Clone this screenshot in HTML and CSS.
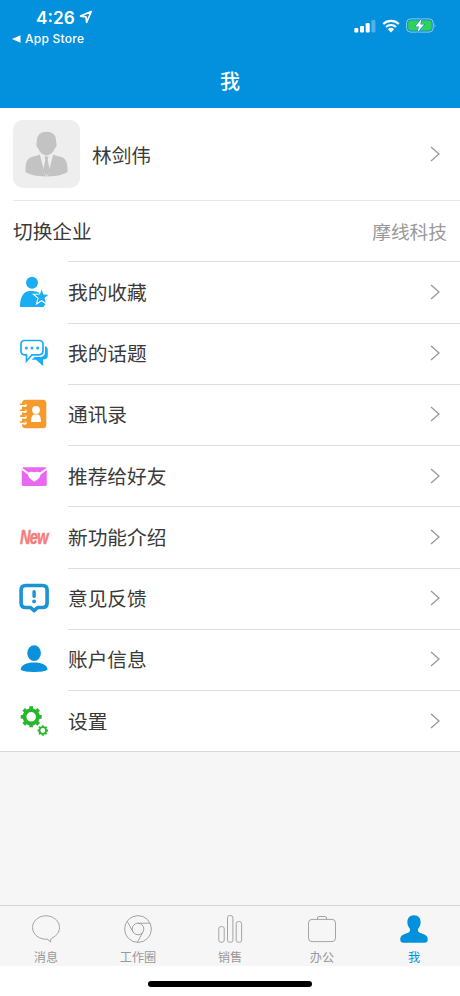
FILE: index.html
```html
<!DOCTYPE html>
<html lang="zh-CN">
<head>
  <meta charset="UTF-8" />
  <meta name="viewport" content="width=device-width, initial-scale=1" />
  <title>我</title>
  <link rel="stylesheet" href="styles.css">
</head>
<body>

  <header class="header">
    <div class="status">
      <div class="status-left">
        <div class="clock">
          <span>4:26</span>
          <svg width="14" height="14" viewBox="0 0 14 14"><path d="M12.3 1.5 L1.5 6.1 L7 6.9 L7.6 12.4 Z" fill="none" stroke="#fff" stroke-width="1.6" stroke-linejoin="round"/></svg>
        </div>
        <div class="back">
          <svg width="9" height="8" viewBox="0 0 9 8"><path d="M0 4 L8.5 0.2 V7.8 Z" fill="#fff"/></svg>
          <span>App Store</span>
        </div>
      </div>
      <div class="status-right">
        <svg width="22" height="14" viewBox="0 0 22 14" fill="#fff">
          <rect x="0.3" y="9" width="4" height="4.5" rx="1"/>
          <rect x="6" y="7" width="4" height="6.5" rx="1"/>
          <rect x="11.7" y="4" width="4" height="9.5" rx="1"/>
          <rect x="17.4" y="1" width="4" height="12.5" rx="1" opacity="0.3"/>
        </svg>
        <svg class="wifi" width="18" height="14" viewBox="0 0 18 14">
          <path d="M1.2 5 A11.2 11.2 0 0 1 16.8 5 M4 8 A7.2 7.2 0 0 1 14 8" fill="none" stroke="#fff" stroke-width="2.2"/>
          <path d="M5.9 10.2 A4.5 4.5 0 0 1 12.1 10.2 L9 13.5 Z" fill="#fff"/>
        </svg>
        <svg class="battery" width="31" height="15" viewBox="0 0 31 15">
          <rect x="0.6" y="0.9" width="26.6" height="13.2" rx="4" fill="none" stroke="#8acbea" stroke-width="1"/>
          <path d="M28.6 5.2 Q30.2 7.5 28.6 9.8 Z" fill="#8acbea"/>
          <rect x="2.2" y="2.4" width="23.4" height="10.2" rx="2.4" fill="#30d158"/>
          <path d="M15.5 0.7 L9.3 8.4 H12.9 L11.5 14.3 L18.2 6.5 H14.4 Z" fill="#fff" stroke="#0390dc" stroke-width="1.1" paint-order="stroke"/>
        </svg>
      </div>
    </div>
    <h1 class="title">我</h1>
  </header>

  <main class="content">
    <section class="list">
      <div class="profile">
        <div class="avatar">
          <svg width="67" height="68" viewBox="0.5 0 67 68" fill="#c3c3c3">
            <path d="M34 11.8 C41 11.8 43.8 16 43.6 22 C45 25 43.3 27.5 42.3 28.6 C40.5 33 37.5 35.4 34 35.4 C30.5 35.4 27.5 33 25.7 28.6 C24.7 27.5 23 25 24.4 22 C24.2 16 27 11.8 34 11.8 Z"/>
            <path d="M27.3 34.6 L33 56.5 C24 56.2 17 54.7 13 52 C12.6 43 14.5 39 18.5 37.3 C21.5 36.2 25.5 36 27.3 34.6 Z"/>
            <path d="M40.7 34.6 L35 56.5 C44 56.2 51 54.7 55 52 C55.4 43 53.5 39 49.5 37.3 C46.5 36.2 42.5 36 40.7 34.6 Z"/>
            <path d="M32 36.5 H36 L35.2 40 L37.3 50 L34 57 L30.7 50 L32.8 40 Z"/>
          </svg>
        </div>
        <span class="name">林剑伟</span>
        <svg class="arrow" width="10" height="16" viewBox="0 0 10 16"><path d="M1 1 L9 8 L1 15"/></svg>
      </div>

      <div class="company">
        <span>切换企业</span>
        <span class="company-name">摩线科技</span>
      </div>

      <div class="item">
        <svg class="icon" width="30" height="32" viewBox="0 0 30 32" fill="#1badf3">
          <circle cx="13" cy="6.8" r="6"/>
          <path d="M1 31 C1 21 4.5 15 11 15 C15 15 19 15.2 21 17.5 L22 24 L26.5 28 L24.5 31 Z"/>
          <path d="M22.6 13.8 L24.4 18.5 L29.4 18.8 L25.5 21.9 L26.8 26.8 L22.6 24 L18.4 26.8 L19.7 21.9 L15.8 18.8 L20.8 18.5 Z" stroke="#fff" stroke-width="2.2" paint-order="stroke"/>
        </svg>
        <span class="label">我的收藏</span>
        <svg class="arrow" width="10" height="16" viewBox="0 0 10 16"><path d="M1 1 L9 8 L1 15"/></svg>
      </div>

      <div class="item">
        <svg class="icon" width="30" height="32" viewBox="0 0 30 32">
          <path d="M26 9 Q28.8 10 28.8 13 V18.5 Q28.8 22.3 24 22.6 V29 L17 22.8 H12.6 L15.5 20 H21.5 Q26 19.6 26 15 Z" fill="#1badf3"/>
          <path d="M5.5 3.5 H20 Q24 3.5 24 7.5 V13.8 Q24 17.8 20 17.8 H13 L7.5 24 V17.8 H5.5 Q2 17.8 2 13.8 V7.5 Q2 3.5 5.5 3.5 Z" fill="#fff" stroke="#1badf3" stroke-width="1.7"/>
          <g fill="#1badf3"><circle cx="7.4" cy="11" r="1.5"/><circle cx="13" cy="11" r="1.5"/><circle cx="18.6" cy="11" r="1.5"/></g>
        </svg>
        <span class="label">我的话题</span>
        <svg class="arrow" width="10" height="16" viewBox="0 0 10 16"><path d="M1 1 L9 8 L1 15"/></svg>
      </div>

      <div class="item">
        <svg class="icon" width="30" height="32" viewBox="0 0 30 32">
          <rect x="3" y="1.7" width="24.3" height="28.6" rx="3.5" fill="#f69a2c"/>
          <g fill="none" stroke="#fff" stroke-width="2"><path d="M1 7.6 H5.7 M1 13.5 H5.7 M1 19.4 H5.7 M1 25.3 H5.7"/></g>
          <g fill="#fff"><circle cx="6" cy="7.3" r="1.8"/><circle cx="6" cy="13.2" r="1.8"/><circle cx="6" cy="19.1" r="1.8"/><circle cx="6" cy="25" r="1.8"/></g>
          <path d="M1.5 6.3 H6 M1.5 12.2 H6 M1.5 18.1 H6 M1.5 24 H6" stroke="#f69a2c" stroke-width="1.6" stroke-linecap="round"/>
          <circle cx="17" cy="12" r="3.9" fill="#fff"/>
          <path d="M12.1 24 Q12 16.9 14.9 16.4 H19.1 Q22 16.9 21.9 24 Z" fill="#fff"/>
        </svg>
        <span class="label">通讯录</span>
        <svg class="arrow" width="10" height="16" viewBox="0 0 10 16"><path d="M1 1 L9 8 L1 15"/></svg>
      </div>

      <div class="item">
        <svg class="icon" width="30" height="32" viewBox="0 0 30 32">
          <rect x="2.8" y="7.2" width="25" height="18.8" rx="1.6" fill="#e868f2"/>
          <path d="M2.8 7.7 L9.6 12.4 Q12.4 11 15.3 12.2 Q18.2 11 21 12.4 L27.8 7.7 V10 L21.7 14.6 Q20.8 18.8 15.3 21.8 Q9.8 18.8 8.9 14.6 L2.8 10 Z" fill="#fff"/>
        </svg>
        <span class="label">推荐给好友</span>
        <svg class="arrow" width="10" height="16" viewBox="0 0 10 16"><path d="M1 1 L9 8 L1 15"/></svg>
      </div>

      <div class="item">
        <span class="icon new"><b>New</b></span>
        <span class="label">新功能介绍</span>
        <svg class="arrow" width="10" height="16" viewBox="0 0 10 16"><path d="M1 1 L9 8 L1 15"/></svg>
      </div>

      <div class="item">
        <svg class="icon" width="30" height="32" viewBox="0 0 30 32">
          <path d="M6.6 3.5 H23.6 Q28.1 3.5 28.1 8 V21 Q28.1 25.5 23.6 25.5 H18.6 L15.1 28.7 L11.6 25.5 H6.6 Q2.1 25.5 2.1 21 V8 Q2.1 3.5 6.6 3.5 Z" fill="none" stroke="#1b93d4" stroke-width="3.6" stroke-linejoin="round"/>
          <path d="M15.1 9.8 V14.3" stroke="#1b93d4" stroke-width="3.4" stroke-linecap="round"/>
          <circle cx="15.1" cy="19.3" r="1.9" fill="#1b93d4"/>
        </svg>
        <span class="label">意见反馈</span>
        <svg class="arrow" width="10" height="16" viewBox="0 0 10 16"><path d="M1 1 L9 8 L1 15"/></svg>
      </div>

      <div class="item">
        <svg class="icon" width="30" height="32" viewBox="0 0 30 32" fill="#0c92dc">
          <ellipse cx="15.1" cy="10.2" rx="6.8" ry="7.9"/>
          <path d="M1.6 26.6 C2.2 21.8 7.6 19.6 15.1 19.6 C22.6 19.6 28 21.8 28.6 26.6 C27.1 28.4 20.6 29.1 15.1 29.1 C9.6 29.1 3.1 28.4 1.6 26.6 Z"/>
        </svg>
        <span class="label">账户信息</span>
        <svg class="arrow" width="10" height="16" viewBox="0 0 10 16"><path d="M1 1 L9 8 L1 15"/></svg>
      </div>

      <div class="item">
        <svg class="icon" width="30" height="32" viewBox="0 0 30 32">
          <defs>
            <g id="gear">
              <circle r="6.7" fill="none" stroke="#27b72e" stroke-width="3.8"/>
              <path d="M0 -7.5 V-10.5 M0 7.5 V10.5 M-7.5 0 H-10.5 M7.5 0 H10.5 M5.3 -5.3 L7.5 -7.5 M5.3 5.3 L7.5 7.5 M-5.3 5.3 L-7.5 7.5 M-5.3 -5.3 L-7.5 -7.5" stroke="#27b72e" stroke-width="3.8"/>
            </g>
          </defs>
          <use href="#gear" transform="translate(12.2 11.8)"/>
          <use href="#gear" transform="translate(23.8 25.5) scale(0.5)"/>
        </svg>
        <span class="label">设置</span>
        <svg class="arrow" width="10" height="16" viewBox="0 0 10 16"><path d="M1 1 L9 8 L1 15"/></svg>
      </div>
    </section>
  </main>

  <nav class="tabbar">
    <a class="tab">
      <svg width="30" height="30" viewBox="0 0 30 30"><path d="M17 25.2 C8.5 26 1.5 20.5 1.5 13.5 C1.5 7 7.5 1.8 15 1.8 C22.5 1.8 28.5 7 28.5 13.5 C28.5 18 26 21.3 22 23.4 Q18.6 25 19.6 28 Q18 27.3 17 25.2"/></svg>
      <span>消息</span>
    </a>
    <a class="tab">
      <svg width="30" height="30" viewBox="0 0 30 30"><circle cx="15" cy="15" r="13.4"/><circle cx="15" cy="15" r="5.8"/><path d="M15 9.2 H27 M10 17.9 L4.2 7.2 M20 17.9 L14.3 28.4"/></svg>
      <span>工作圈</span>
    </a>
    <a class="tab">
      <svg width="30" height="30" viewBox="0 0 30 30"><rect x="3.8" y="12.6" width="5.4" height="15.6" rx="2"/><rect x="12.5" y="1.6" width="5.4" height="26.6" rx="2"/><rect x="21.2" y="7.6" width="5.4" height="20.6" rx="2"/></svg>
      <span>销售</span>
    </a>
    <a class="tab">
      <svg width="30" height="30" viewBox="0 0 30 30"><rect x="1.5" y="5.4" width="27" height="22.2" rx="3.5"/><path d="M10.5 5.4 V4 Q10.5 2.5 12 2.5 H18 Q19.5 2.5 19.5 4 V5.4"/></svg>
      <span>办公</span>
    </a>
    <a class="tab active">
      <svg width="30" height="30" viewBox="0 0 30 30"><path d="M15 1.3 C19.5 1.3 21.9 4.5 21.6 9 C21.4 12 20 13.5 19 15 C18.6 18 20 18.6 23.5 19.8 C27 21 29 22.5 28.7 26 Q28.5 28.7 25.5 28.7 H4.5 Q1.5 28.7 1.3 26 C1 22.5 3 21 6.5 19.8 C10 18.6 11.4 18 11 15 C10 13.5 8.6 12 8.4 9 C8.1 4.5 10.5 1.3 15 1.3 Z"/></svg>
      <span>我</span>
    </a>
  </nav>
  <div class="home"><div class="home-bar"></div></div>

</body>
</html>
```
FILE: styles.css
```css
* {
  box-sizing: border-box;
}
body {
  margin: 0;
  height: 996px;
  display: flex;
  flex-direction: column;
  font-family: Inter, "Noto Sans CJK SC", sans-serif;
  background: #fff;
  color: #3a3a3a;
}
svg {
  display: block;
  flex-shrink: 0;
}
.header {
  height: 108px;
  background: #0390dc;
  color: #fff;
}
.status {
  display: flex;
  justify-content: space-between;
  height: 54px;
  padding: 7px 23px 0 12px;
}
.clock {
  display: flex;
  align-items: center;
  gap: 4px;
  padding-left: 24px;
  height: 20px;
  font-size: 17.3px;
  font-weight: 600;
}
.back {
  display: flex;
  align-items: center;
  gap: 4px;
  height: 23px;
  font-size: 12px;
  font-weight: 500;
  letter-spacing: 0.25px;
}
.status-right {
  display: flex;
  align-items: center;
  height: 37px;
}
.wifi {
  margin-left: 6px;
}
.battery {
  margin-left: 6px;
}
.title {
  margin: 0;
  height: 54px;
  line-height: 56px;
  text-align: center;
  font-size: 20px;
  font-weight: 500;
}
.content {
  flex: 1;
  background: #f6f6f6;
}
.list {
  background: #fff;
  border-bottom: 1px solid #d9d9d9;
  font-size: 19.7px;
}
.profile {
  display: flex;
  align-items: center;
  height: 92px;
  padding: 0 20px 0 13px;
}
.avatar {
  width: 67px;
  height: 68px;
  border-radius: 10px;
  background: #eee;
}
.name {
  flex: 1;
  margin-left: 12px;
}
.arrow {
  fill: none;
  stroke: #999;
  stroke-width: 1.3;
}
.company {
  display: flex;
  justify-content: space-between;
  align-items: center;
  height: 61.25px;
  margin-left: 13px;
  padding: 0 13px 2px 0;
  border-top: 1px solid #e8e8e8;
}
.company-name {
  color: #999;
  font-size: 18.7px;
}
.item {
  display: grid;
  grid-template-columns: 49px 1fr 30px;
  align-items: center;
  height: 61.25px;
  padding-left: 19px;
  background: linear-gradient(#dedede, #dedede) 68px 0 / 100% 1px no-repeat;
}
.label {
  padding-bottom: 1px;
}
.new {
  padding: 1px 0 0 1px;
  color: #f47c7c;
  line-height: 32px;
}
.new b {
  display: inline-block;
  font-family: "Liberation Sans", sans-serif;
  font-size: 20px;
  font-style: italic;
  letter-spacing: -1px;
  transform: scaleX(0.73);
  transform-origin: left;
  -webkit-text-stroke: 0.5px #f47c7c;
}
.tabbar {
  display: flex;
  height: 61px;
  padding-top: 8px;
  background: #f6f6f6;
  border-top: 1px solid #d4d4d4;
}
.tab {
  flex: 1;
  display: flex;
  flex-direction: column;
  align-items: center;
  color: #999;
  font-size: 12.2px;
  line-height: 18px;
}
.tab svg {
  fill: none;
  stroke: #a4a4a4;
  stroke-width: 1;
}
.tab span {
  margin-top: 5px;
}
.tab.active {
  color: #0390dc;
}
.tab.active svg {
  fill: #0390dc;
  stroke: none;
}
.home {
  height: 30px;
  padding-top: 15px;
}
.home-bar {
  width: 164px;
  height: 6px;
  margin: 0 auto;
  border-radius: 3px;
  background: #000;
}
```
